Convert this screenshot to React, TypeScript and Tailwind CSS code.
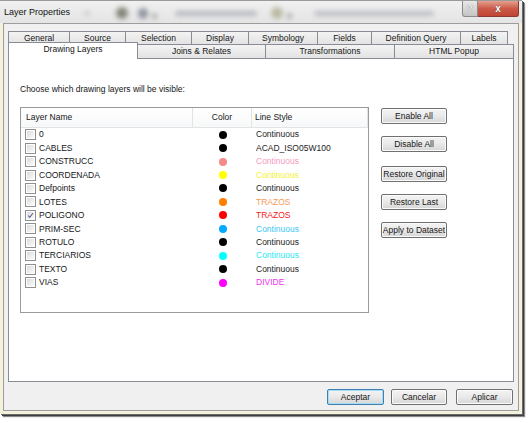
import React from 'react';

interface Layer {
  name: string;
  dot: string;
  style: string;
  styleColor: string;
  checked?: boolean;
}

const layers: Layer[] = [
  { name: '0', dot: '#000000', style: 'Continuous', styleColor: '#1b1b1b' },
  { name: 'CABLES', dot: '#000000', style: 'ACAD_ISO05W100', styleColor: '#1b1b1b' },
  { name: 'CONSTRUCC', dot: '#f48a8a', style: 'Continuous', styleColor: '#f79bc0' },
  { name: 'COORDENADA', dot: '#ffff00', style: 'Continuous', styleColor: '#f2f230' },
  { name: 'Defpoints', dot: '#000000', style: 'Continuous', styleColor: '#1b1b1b' },
  { name: 'LOTES', dot: '#ff7f00', style: 'TRAZOS', styleColor: '#f59a55' },
  { name: 'POLIGONO', dot: '#ff0000', style: 'TRAZOS', styleColor: '#f41818', checked: true },
  { name: 'PRIM-SEC', dot: '#00aaff', style: 'Continuous', styleColor: '#3cc8f5' },
  { name: 'ROTULO', dot: '#000000', style: 'Continuous', styleColor: '#1b1b1b' },
  { name: 'TERCIARIOS', dot: '#00ffff', style: 'Continuous', styleColor: '#28e8f0' },
  { name: 'TEXTO', dot: '#000000', style: 'Continuous', styleColor: '#1b1b1b' },
  { name: 'VIAS', dot: '#ff00ff', style: 'DIVIDE', styleColor: '#ee33ee' },
];

const row1 = [
  { label: 'General', w: 'w-[61px]' },
  { label: 'Source', w: 'w-[56px]' },
  { label: 'Selection', w: 'w-[66px]' },
  { label: 'Display', w: 'w-[57px]' },
  { label: 'Symbology', w: 'w-[69px]' },
  { label: 'Fields', w: 'w-[54px]' },
  { label: 'Definition Query', w: 'w-[89px]' },
  { label: 'Labels', w: 'w-[48px]' },
];

const row2 = [
  { label: 'Joins & Relates', w: 'w-[127px]' },
  { label: 'Transformations', w: 'w-[129px]' },
  { label: 'HTML Popup', w: 'w-[120px]' },
];

const WinButton: React.FC<{ label: string; className?: string; isDefault?: boolean }> = ({
  label,
  className = '',
  isDefault,
}) => (
  <div
    className={`h-[16px] flex items-center justify-center rounded-[2px] border text-[8.5px] leading-none bg-gradient-to-b from-[#f4f4f4] via-[#e9e9e9] to-[#d6d6d6] ${
      isDefault ? 'border-[#3c7fb1] shadow-[inset_0_0_0_1px_#a6dcf6]' : 'border-[#707070] shadow-[inset_0_0_0_1px_#fbfbfb]'
    } ${className}`}
  >
    {label}
  </div>
);

const Checkbox: React.FC<{ checked?: boolean }> = ({ checked }) => (
  <div className="w-[11px] h-[11px] border border-[#8e8f8f] bg-white p-[1px] shrink-0">
    <div className="w-full h-full bg-gradient-to-br from-[#dcdcdc] to-[#fbfbfb] relative">
      {checked && (
        <svg viewBox="0 0 9 9" className="absolute inset-0 w-full h-full">
          <path d="M1.6 4.6 L3.6 6.8 L7.6 1.6" fill="none" stroke="#4a5c8c" strokeWidth="1.3" />
        </svg>
      )}
    </div>
  </div>
);

export default function App() {
  return (
    <div className="w-[529px] h-[423px] bg-white font-['Liberation_Sans',Arial,sans-serif] text-[#161616] text-[8.5px] overflow-hidden">
      <div className="w-[522px] h-[414px] flex flex-col bg-[#f4f2dc] shadow-[1px_1px_0_#6a6a6a,2px_2px_0_#3c3c3c,3px_3px_1px_#8a8a8a]">
        {/* Title bar */}
        <div className="h-[23px] flex items-start relative bg-gradient-to-b from-[#f0f0f0] to-[#e4e4e4] border-t border-[#9a9a9a] overflow-hidden">
          <div className="pl-[4px] pt-[6px] text-[9px] leading-[10px] text-[#111]">Layer Properties</div>
          {/* blurred background behind glass */}
          <div className="flex items-center ml-[14px] mt-[6px] blur-[2.5px] opacity-80">
            <div className="w-[6px] h-[3px] bg-[#b0b0b0] rounded-full" />
            <div className="w-[12px] h-[12px] bg-[#6d6d60] rounded-full ml-[26px]" />
            <div className="w-[10px] h-[11px] bg-[#7d8090] rounded-full ml-[10px]" />
            <div className="w-[5px] h-[6px] bg-[#9a9a9a] rounded-full ml-[4px] mt-[6px]" />
            <div className="w-[82px] h-[5px] bg-[#a8adb4] rounded-full ml-[18px]" />
            <div className="w-[12px] h-[12px] bg-[#b0ae90] rounded-full ml-[14px]" />
            <div className="w-[5px] h-[6px] bg-[#9a9a9a] rounded-full ml-[4px] mt-[6px]" />
            <div className="w-[120px] h-[5px] bg-[#b0b4bb] rounded-full ml-[22px]" />
          </div>
          <div className="absolute right-[3px] top-0 flex">
            <div className="w-[16px] h-[16px] rounded-bl-[3px] border border-t-0 border-[#8a8a8a] bg-gradient-to-b from-[#e8e8e8] to-[#c4c4c4] flex items-center justify-center text-[9px] text-[#f8f8f8] font-bold [text-shadow:0_0_1px_#555]">
              ?
            </div>
            <div className="w-[41px] h-[16px] rounded-br-[3px] border border-t-0 border-l-0 border-[#8a3a30] bg-gradient-to-b from-[#e4a090] via-[#cc5a48] to-[#c04434] flex items-center justify-center text-[10px] text-white font-bold [text-shadow:0_0_1px_#333]">
              x
            </div>
          </div>
        </div>

        {/* Client area */}
        <div className="flex-1 mx-[3px] mb-[3px] border border-[#9d9d9d] bg-[#f0f0f0] flex flex-col pl-[4px] pt-[7px] pb-[5px]">
          {/* Tabs row 1 */}
          <div className="flex h-[13px]">
            {row1.map((t, i) => (
              <div
                key={t.label}
                className={`${t.w} h-full flex items-center justify-center border-t border-l border-[#898c95] bg-gradient-to-b from-[#f3f3f3] to-[#e3e3e3] leading-none ${
                  i === row1.length - 1 ? 'border-r' : ''
                }`}
              >
                {t.label}
              </div>
            ))}
          </div>
          {/* Tabs row 2 */}
          <div className="flex h-[14px] items-end relative z-10">
            <div className="w-[130px] h-[17px] -mb-[1px] flex items-start justify-center pt-[2px] border border-b-0 border-[#898c95] bg-white leading-none">
              Drawing Layers
            </div>
            {row2.map((t, i) => (
              <div
                key={t.label}
                className={`${t.w} h-full flex items-center justify-center border-t border-[#898c95] bg-gradient-to-b from-[#f3f3f3] to-[#e3e3e3] leading-none ${
                  i === 0 ? '' : 'border-l'
                } ${i === row2.length - 1 ? 'border-r' : ''}`}
              >
                {t.label}
              </div>
            ))}
          </div>

          {/* Tab page */}
          <div className="w-[506px] h-[324px] border border-[#898c95] bg-white flex flex-col pl-[11px] pt-[25px]">
            <div className="h-[10px] leading-[10px]">Choose which drawing layers will be visible:</div>
            <div className="flex mt-[13px]">
              {/* List */}
              <div className="w-[349px] h-[206px] border border-[#9a9a9a] bg-white flex flex-col">
                <div className="h-[20px] flex border-b border-[#e3e3e3] bg-gradient-to-b from-white to-[#f7f8f9]">
                  <div className="w-[172px] h-full flex items-center pl-[5px] border-r border-[#e3e3e3]">Layer Name</div>
                  <div className="w-[59px] h-full flex items-center justify-center border-r border-[#e3e3e3]">Color</div>
                  <div className="flex-1 h-full flex items-center pl-[3px] border-r border-[#e3e3e3]">Line Style</div>
                </div>
                {layers.map((l) => (
                  <div key={l.name} className="h-[13.45px] flex items-center">
                    <div className="w-[172px] flex items-center pl-[4px]">
                      <Checkbox checked={l.checked} />
                      <span className="ml-[3px] leading-none">{l.name}</span>
                    </div>
                    <div className="w-[60px] flex justify-center">
                      <div className="w-[8px] h-[8px] rounded-full" style={{ backgroundColor: l.dot }} />
                    </div>
                    <div className="pl-[3px] leading-none" style={{ color: l.styleColor }}>
                      {l.style}
                    </div>
                  </div>
                ))}
              </div>
              {/* Buttons */}
              <div className="flex flex-col ml-[12px] mt-[1px]">
                <WinButton label="Enable All" className="w-[66px]" />
                <WinButton label="Disable All" className="w-[66px] mt-[12px]" />
                <WinButton label="Restore Original" className="w-[66px] mt-[14px]" />
                <WinButton label="Restore Last" className="w-[66px] mt-[12px]" />
                <WinButton label="Apply to Dataset" className="w-[66px] mt-[12px]" />
              </div>
            </div>
          </div>

          {/* Dialog buttons */}
          <div className="w-[505px] flex justify-end mt-[7px]">
            <WinButton label="Aceptar" className="w-[57px]" isDefault />
            <WinButton label="Cancelar" className="w-[56px] ml-[7px]" />
            <WinButton label="Aplicar" className="w-[57px] ml-[9px]" />
          </div>
        </div>
      </div>
    </div>
  );
}
